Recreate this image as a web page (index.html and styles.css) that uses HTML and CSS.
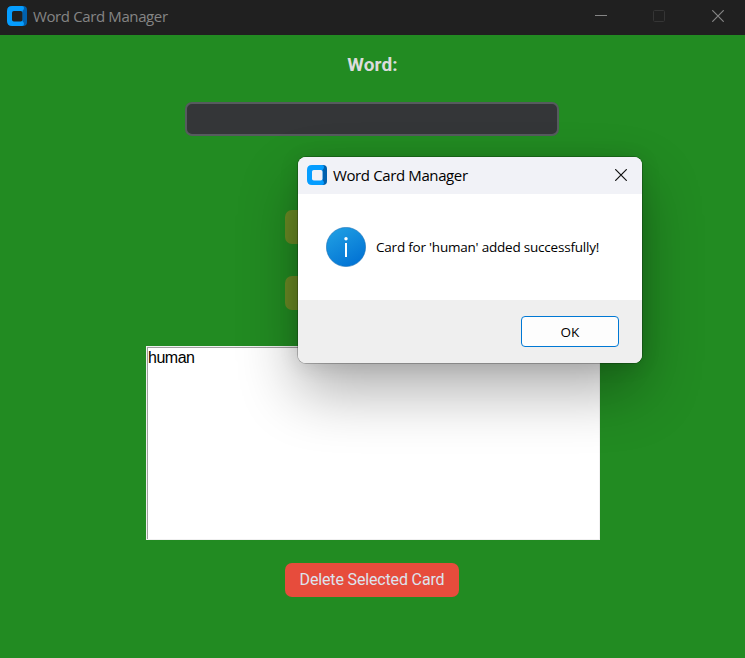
FILE: index.html
```html
<!DOCTYPE html>
<html lang="en">
<head>
<meta charset="utf-8">
<title>Word Card Manager</title>
<link rel="stylesheet" href="styles.css">
</head>
<body>
<svg width="0" height="0" class="defs" aria-hidden="true">
  <symbol id="logo" viewBox="0 0 20 20">
    <path fill="#0061ae" d="M12 0h4q4 0 4 4v12q0 4-4 4h-4z"/>
    <path fill="#059dff" d="M5 0h10q2 0 2 2 0 1.500-1.500 3v10q1.500 1.500 1.500 3 0 2-2 2H5q-5 0-5-5V5q0-5 5-5z"/>
  </symbol>
</svg>
<div class="window">
  <header class="titlebar">
    <svg class="logo" viewBox="0 0 20 20"><use href="#logo"/><rect x="5" y="5" width="10.500" height="10.500" rx="1.800" fill="#202020"/></svg>
    <span class="title">Word Card Manager</span>
    <div class="controls">
      <svg viewBox="0 0 12 12"><path d="M0 5.500h12" stroke="#858585"/></svg>
      <svg viewBox="0 0 12 12"><rect x=".5" y=".5" width="11" height="11" rx="1" stroke="#353535"/></svg>
      <svg viewBox="0 0 12 12"><path d="M.3.300l11.400 11.400M11.700.300L.3 11.700" stroke="#858585" stroke-width="1.200"/></svg>
    </div>
  </header>
  <main class="content">
    <div class="label">Word:</div>
    <div class="entry"></div>
    <div class="button olive first"></div>
    <div class="button olive second"></div>
    <div class="list"><div class="item">human</div></div>
    <div class="button delete"><span>Delete Selected Card</span></div>
  </main>
</div>
<section class="dialog">
  <header class="dialog-head">
    <svg class="logo" viewBox="0 0 20 20"><use href="#logo"/><rect x="5" y="5" width="10.500" height="10.500" rx="1.800" fill="#f1f2f7"/></svg>
    <span class="title">Word Card Manager</span>
    <svg class="close" viewBox="0 0 12 12"><path d="M.2.200l11.600 11.600M11.800.200L.2 11.800"/></svg>
  </header>
  <div class="dialog-body">
    <svg class="info" viewBox="0 0 40 40">
      <defs><linearGradient id="blue" x1=".2" y1="0" x2=".8" y2="1"><stop stop-color="#209fe3"/><stop offset="1" stop-color="#0070d3"/></linearGradient></defs>
      <circle cx="20" cy="20" r="19.600" fill="url(#blue)" stroke="#136bb4" stroke-opacity=".7" stroke-width=".8"/>
      <circle cx="20" cy="11.700" r="1.700" fill="#fff"/>
      <path d="M20 16v14" stroke="#fff" stroke-width="2"/>
    </svg>
    <span class="message">Card for 'human' added successfully!</span>
  </div>
  <footer class="dialog-foot"><div class="ok">OK</div></footer>
</section>
</body>
</html>
```

FILE: styles.css
```css
* { box-sizing: border-box; }
body { margin: 0; overflow: hidden; font-family: "Open Sans", "Noto Sans", sans-serif; }
svg { display: block; fill: none; }
.defs { position: absolute; }
.window { width: 745px; height: 658px; background: #228b22; }
.titlebar { height: 35px; background: #202020; display: flex; align-items: center; padding: 0 21px 3px 7px; }
.logo { width: 20px; height: 20px; flex: none; }
.title { margin-left: 6px; font-size: 15px; line-height: 20px; letter-spacing: -.38px; white-space: nowrap; }
.titlebar .title { color: #858585; }
.controls { display: flex; gap: 47px; margin-left: auto; }
.controls svg { width: 12px; height: 12px; }
.controls svg:first-child { margin-right: -1px; }
.content { display: flex; flex-direction: column; align-items: center; font-family: Roboto, sans-serif; }
.label { margin-top: 18px; height: 24px; line-height: 24px; font-size: 19px; font-weight: 700; letter-spacing: .1px; color: #dcdcdc; }
.entry { width: 374px; height: 34px; margin-top: 25px; margin-right: 1px; border: 2px solid #565b5e; border-radius: 7px; background: #343638; }
.button { width: 174px; height: 34px; margin-right: 1px; border-radius: 7px; }
.olive { background: #6a8a24; }
.first { margin-top: 74px; }
.second { margin-top: 32px; }
.list { width: 454px; height: 194px; margin-top: 36px; margin-left: 1px; background: #fff; border: 1px solid #f0f0f0; box-shadow: inset 1px 1px #a0a0a0; font-family: "Liberation Sans", sans-serif; font-size: 16px; line-height: 18px; letter-spacing: -.5px; color: #000; }
.item { padding: 2px 0 0 1px; }
.delete { margin-top: 23px; background: #e74c3c; color: #dce4ee; font-size: 16px; line-height: 33px; letter-spacing: -.15px; text-align: center; white-space: nowrap; }
.dialog { position: absolute; left: 298px; top: 157px; width: 344px; height: 206px; border-radius: 8px; overflow: hidden; background: #fff; box-shadow: 0 0 0 1px rgba(0,0,0,.22), 0 28px 60px rgba(0,0,0,.32), 0 2px 20px rgba(0,0,0,.12); color: #000; }
.dialog-head { height: 37px; background: #f1f2f7; display: flex; align-items: center; padding: 0 15px 1px 9px; }
.close { width: 12px; height: 12px; margin-left: auto; stroke: #111; stroke-width: 1.2; }
.dialog-body { height: 106px; padding-left: 28px; display: flex; align-items: center; }
.info { width: 40px; height: 40px; }
.message { margin-left: 10px; font-size: 13.5px; letter-spacing: -.21px; white-space: nowrap; }
.dialog-foot { height: 63px; background: #efefef; display: flex; justify-content: flex-end; padding: 16px 23px; }
.ok { width: 98px; height: 31px; border: 1px solid #0078d4; border-radius: 4px; background: #fdfdfd; text-align: center; font-size: 13.5px; line-height: 30px; }
```
